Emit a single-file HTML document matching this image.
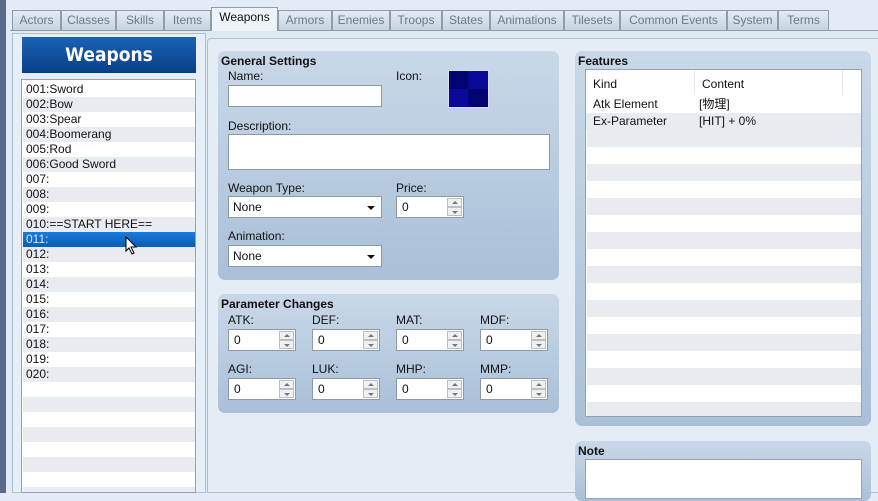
<!DOCTYPE html>
<html><head><meta charset="utf-8"><style>
*{box-sizing:border-box;margin:0;padding:0}
body{width:878px;height:493px;overflow:hidden;background:#e3ecf6;font-family:"Liberation Sans","DejaVu Sans",sans-serif;font-size:12px;color:#111;position:relative}
.a{position:absolute}
.tab{position:absolute;top:10px;height:20px;border:1px solid #8e9cab;border-bottom:none;background:linear-gradient(#e4ecf4,#c6d3e0);color:#6a7a8a;font-size:12px;text-align:center;line-height:19px}
.tab.on{top:7px;height:24px;background:#eef3f9;color:#111;z-index:2}
.grp{position:absolute;border-radius:7px;background:linear-gradient(#c9d8e8,#a9c0d8);}
.gt{position:absolute;font-weight:bold;font-size:12px;color:#111}
.lbl{position:absolute;font-size:12px}
.inp{position:absolute;background:#fff;border:1px solid #8d99a6;height:22px}
.sel{position:absolute;background:#fff;border:1px solid #8d99a6;height:22px;padding-left:4px;line-height:20px}
.sel:after{content:"";position:absolute;right:6px;top:9px;border:4px solid transparent;border-top:4px solid #111;border-bottom:none}
.sp{position:absolute;width:68px;height:22px;background:#fff;border:1px solid #8d99a6;padding-left:5px;line-height:20px}
.sp i{position:absolute;right:1px;width:15px;height:9px;border:1px solid #b8c0c8;background:#eef0f2}
.sp i.u{top:1px}.sp i.d{top:10px}
.sp i:after{content:"";position:absolute;left:4px;top:2px;border:3px solid transparent}
.sp i.u:after{border-bottom:3px solid #777;border-top:none}
.sp i.d:after{border-top:3px solid #777;border-bottom:none;top:3px}
.row{position:absolute;left:0;width:172px;height:15px;line-height:15px;padding-left:3px}
.frow{position:absolute;left:0;width:275px;height:17px;line-height:17px}
</style></head><body>
<div class="a" style="left:0;top:0;width:6px;height:493px;background:#5a6a8a"></div>
<div class="a" style="left:10px;top:30px;width:868px;height:463px;background:#dfe9f4;border-top:1px solid #8e9cab"></div>
<div class="tab" style="left:12px;width:49px">Actors</div>
<div class="tab" style="left:61px;width:55px">Classes</div>
<div class="tab" style="left:116px;width:48px">Skills</div>
<div class="tab" style="left:164px;width:47px">Items</div>
<div class="tab on" style="left:211px;width:67px">Weapons</div>
<div class="tab" style="left:278px;width:54px">Armors</div>
<div class="tab" style="left:332px;width:58px">Enemies</div>
<div class="tab" style="left:390px;width:52px">Troops</div>
<div class="tab" style="left:442px;width:48px">States</div>
<div class="tab" style="left:490px;width:74px">Animations</div>
<div class="tab" style="left:564px;width:56px">Tilesets</div>
<div class="tab" style="left:620px;width:107px">Common Events</div>
<div class="tab" style="left:727px;width:51px">System</div>
<div class="tab" style="left:778px;width:51px">Terms</div>

<div class="a" style="left:12px;top:33px;width:194px;height:460px;border:1px solid #b0bfcf;background:#e6eef7"></div>
<div class="a" style="left:22px;top:37px;width:174px;height:36px;background:linear-gradient(#1a62b6,#0a3f86);color:#fff;font-family:'DejaVu Sans Condensed','Liberation Sans',sans-serif;font-size:19px;text-align:center;line-height:36px;font-weight:bold">Weapons</div>
<div class="a" style="left:21px;top:79px;width:175px;height:414px;background:#fff;border:1px solid #93a3b5;overflow:hidden">
<div class="a" style="left:1px;top:2px;width:172px;height:412px;background:repeating-linear-gradient(#fff 0 15px,#e8ecf0 15px 30px)"></div>
<div class="a" style="left:1px;top:2px">
<div class="row" style="top:0">001:Sword</div><div class="row" style="top:15px">002:Bow</div><div class="row" style="top:30px">003:Spear</div><div class="row" style="top:45px">004:Boomerang</div><div class="row" style="top:60px">005:Rod</div><div class="row" style="top:75px">006:Good Sword</div><div class="row" style="top:90px">007:</div><div class="row" style="top:105px">008:</div><div class="row" style="top:120px">009:</div><div class="row" style="top:135px">010:==START HERE==</div>
<div class="row" style="top:150px;background:linear-gradient(#1d7ad8,#0a5cb8);color:#cfe8ff">011:</div>
<div class="row" style="top:165px">012:</div><div class="row" style="top:180px">013:</div><div class="row" style="top:195px">014:</div><div class="row" style="top:210px">015:</div><div class="row" style="top:225px">016:</div><div class="row" style="top:240px">017:</div><div class="row" style="top:255px">018:</div><div class="row" style="top:270px">019:</div><div class="row" style="top:285px">020:</div>
</div></div>
<svg class="a" style="left:125px;top:236px" width="14" height="20" viewBox="0 0 14 20"><path d="M1 1 L1 15 L4 12 L7 18 L9 17 L6 11 L11 11 Z" fill="#fff" stroke="#000" stroke-width="1"/></svg>

<div class="a" style="left:207px;top:38px;width:671px;height:455px;border:1px solid #b0bfcf;border-right:none;background:#e4edf6;border-radius:4px 0 0 0"></div>

<div class="grp" style="left:218px;top:51px;width:341px;height:229px"></div>
<div class="gt" style="left:221px;top:54px">General Settings</div>
<div class="lbl" style="left:228px;top:69px">Name:</div>
<div class="inp" style="left:228px;top:85px;width:154px"></div>
<div class="lbl" style="left:396px;top:69px">Icon:</div>
<div class="a" style="left:448px;top:70px;width:41px;height:38px;border:1px solid #dde;background:conic-gradient(#0a0a9a 0 25%,#020270 0 50%,#0a0a9a 0 75%,#020270 0)"></div>
<div class="lbl" style="left:228px;top:119px">Description:</div>
<div class="inp" style="left:228px;top:134px;width:322px;height:36px"></div>
<div class="lbl" style="left:228px;top:181px">Weapon Type:</div>
<div class="sel" style="left:228px;top:196px;width:154px">None</div>
<div class="lbl" style="left:396px;top:181px">Price:</div>
<div class="sp" style="left:396px;top:196px">0<i class="u"></i><i class="d"></i></div>
<div class="lbl" style="left:228px;top:229px">Animation:</div>
<div class="sel" style="left:228px;top:245px;width:154px">None</div>

<div class="grp" style="left:218px;top:294px;width:341px;height:119px"></div>
<div class="gt" style="left:221px;top:297px">Parameter Changes</div>
<div class="lbl" style="left:228px;top:313px">ATK:</div><div class="lbl" style="left:312px;top:313px">DEF:</div><div class="lbl" style="left:396px;top:313px">MAT:</div><div class="lbl" style="left:480px;top:313px">MDF:</div>
<div class="sp" style="left:228px;top:329px">0<i class="u"></i><i class="d"></i></div>
<div class="sp" style="left:312px;top:329px">0<i class="u"></i><i class="d"></i></div>
<div class="sp" style="left:396px;top:329px">0<i class="u"></i><i class="d"></i></div>
<div class="sp" style="left:480px;top:329px">0<i class="u"></i><i class="d"></i></div>
<div class="lbl" style="left:228px;top:362px">AGI:</div><div class="lbl" style="left:312px;top:362px">LUK:</div><div class="lbl" style="left:396px;top:362px">MHP:</div><div class="lbl" style="left:480px;top:362px">MMP:</div>
<div class="sp" style="left:228px;top:378px">0<i class="u"></i><i class="d"></i></div>
<div class="sp" style="left:312px;top:378px">0<i class="u"></i><i class="d"></i></div>
<div class="sp" style="left:396px;top:378px">0<i class="u"></i><i class="d"></i></div>
<div class="sp" style="left:480px;top:378px">0<i class="u"></i><i class="d"></i></div>

<div class="grp" style="left:575px;top:51px;width:296px;height:375px"></div>
<div class="gt" style="left:578px;top:54px">Features</div>
<div class="a" style="left:585px;top:69px;width:277px;height:348px;background:#fff;border:1px solid #93a3b5;overflow:hidden">
<div class="a" style="left:1px;top:60px;width:275px;height:290px;background:repeating-linear-gradient(#e8ecf0 0 17px,#fff 17px 34px)"></div>
<div class="a" style="left:108px;top:0;width:1px;height:25px;background:#e4e8ec"></div>
<div class="a" style="left:256px;top:0;width:1px;height:25px;background:#e4e8ec"></div>
<div class="a" style="left:7px;top:7px">Kind</div><div class="a" style="left:116px;top:7px">Content</div>
<div class="frow" style="top:26px"><span class="a" style="left:7px">Atk Element</span><span class="a" style="left:113px;font-family:'Liberation Sans','Noto Sans CJK JP',sans-serif">[物理]</span></div>
<div class="frow" style="top:43px;background:#e8ecf0"><span class="a" style="left:7px">Ex-Parameter</span><span class="a" style="left:113px">[HIT] + 0%</span></div>
</div>

<div class="grp" style="left:575px;top:441px;width:296px;height:60px"></div>
<div class="gt" style="left:578px;top:444px">Note</div>
<div class="a" style="left:585px;top:459px;width:277px;height:40px;background:#fff;border:1px solid #93a3b5"></div>
</body></html>
